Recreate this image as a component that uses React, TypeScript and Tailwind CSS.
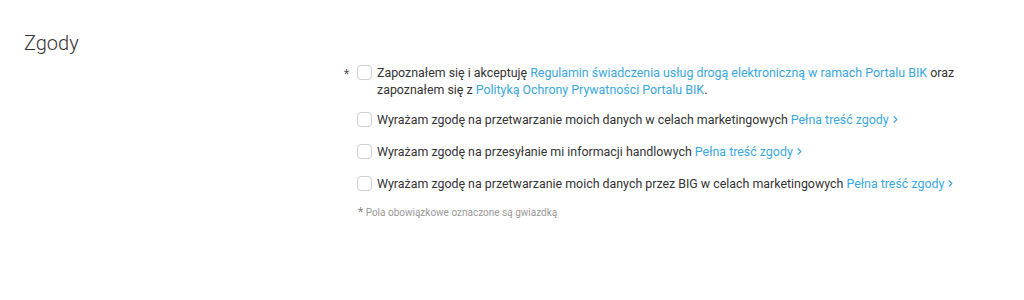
import { ChevronRight } from 'lucide-react';

const link = 'text-[#3aa8e0]';

interface ConsentRowProps {
  required?: boolean;
  className?: string;
  children: React.ReactNode;
}

function ConsentRow({ required, className, children }: ConsentRowProps) {
  return (
    <label className={`flex items-start ${className ?? ''}`}>
      <span className="w-[13px] pt-[2px] text-[12px] leading-[17px] text-[#555]">{required ? '*' : ''}</span>
      <input
        type="checkbox"
        className="mt-[1px] h-[15px] w-[15px] shrink-0 appearance-none rounded-[4px] border border-[#cfcfcf] bg-white"
      />
      <span className="ml-[5px] w-[600px] text-[12.4px] leading-[17px] text-[#333]">{children}</span>
    </label>
  );
}

function FullText() {
  return (
    <a href="#" className={`${link} inline-flex items-center`}>
      Pełna treść zgody
      <ChevronRight className="ml-[1px] h-[11px] w-[11px]" strokeWidth={2.5} />
    </a>
  );
}

export default function App() {
  return (
    <div className="flex h-[300px] w-[1024px] bg-white font-['Roboto',sans-serif]">
      <div className="w-[344px] pl-[24px] pt-[29px]">
        <h2 className="text-[20px] font-light leading-[28px] text-[#333]">Zgody</h2>
      </div>
      <div className="pt-[64px]">
        <div className="flex flex-col">
          <ConsentRow required>
            Zapoznałem się i akceptuję{' '}
            <a href="#" className={link}>
              Regulamin świadczenia usług drogą elektroniczną w ramach Portalu BIK
            </a>{' '}
            oraz zapoznałem się z{' '}
            <a href="#" className={link}>
              Polityką Ochrony Prywatności Portalu BIK
            </a>
            .
          </ConsentRow>
          <ConsentRow className="mt-[13px]">
            Wyrażam zgodę na przetwarzanie moich danych w celach marketingowych <FullText />
          </ConsentRow>
          <ConsentRow className="mt-[15px]">
            Wyrażam zgodę na przesyłanie mi informacji handlowych <FullText />
          </ConsentRow>
          <ConsentRow className="mt-[15px]">
            Wyrażam zgodę na przetwarzanie moich danych przez BIG w celach marketingowych <FullText />
          </ConsentRow>
        </div>
        <p className="mt-[11px] pl-[14px] text-[10px] text-[#999]">
          <span className="text-[12px] text-[#888]">*</span> Pola obowiązkowe oznaczone są gwiazdką
        </p>
      </div>
    </div>
  );
}
